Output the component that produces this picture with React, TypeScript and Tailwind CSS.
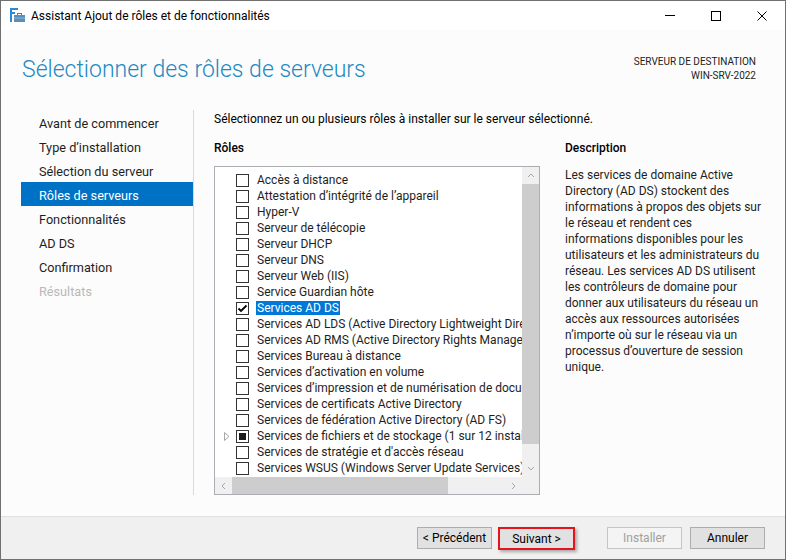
import React from "react";

const navItems = [
  { label: "Avant de commencer" },
  { label: "Type d’installation" },
  { label: "Sélection du serveur" },
  { label: "Rôles de serveurs", active: true },
  { label: "Fonctionnalités" },
  { label: "AD DS" },
  { label: "Confirmation" },
  { label: "Résultats", disabled: true },
];

type Role = {
  label: string;
  checked?: boolean;
  partial?: boolean;
  selected?: boolean;
  expandable?: boolean;
};

const roles: Role[] = [
  { label: "Accès à distance" },
  { label: "Attestation d’intégrité de l’appareil" },
  { label: "Hyper-V" },
  { label: "Serveur de télécopie" },
  { label: "Serveur DHCP" },
  { label: "Serveur DNS" },
  { label: "Serveur Web (IIS)" },
  { label: "Service Guardian hôte" },
  { label: "Services AD DS", checked: true, selected: true },
  { label: "Services AD LDS (Active Directory Lightweight Directory Services)" },
  { label: "Services AD RMS (Active Directory Rights Management Services)" },
  { label: "Services Bureau à distance" },
  { label: "Services d’activation en volume" },
  { label: "Services d’impression et de numérisation de document" },
  { label: "Services de certificats Active Directory" },
  { label: "Services de fédération Active Directory (AD FS)" },
  {
    label: "Services de fichiers et de stockage (1 sur 12 installé(s))",
    partial: true,
    expandable: true,
  },
  { label: "Services de stratégie et d'accès réseau" },
  { label: "Services WSUS (Windows Server Update Services)" },
];

const description = [
  "Les services de domaine Active",
  "Directory (AD DS) stockent des",
  "informations à propos des objets sur",
  "le réseau et rendent ces",
  "informations disponibles pour les",
  "utilisateurs et les administrateurs du",
  "réseau. Les services AD DS utilisent",
  "les contrôleurs de domaine pour",
  "donner aux utilisateurs du réseau un",
  "accès aux ressources autorisées",
  "n’importe où sur le réseau via un",
  "processus d’ouverture de session",
  "unique.",
];

const AppIcon = () => (
  <svg width="16" height="16" viewBox="0 0 16 16">
    <rect x="0" y="0" width="2" height="14" fill="#2b8ad6" />
    <rect x="0" y="0" width="8" height="2" fill="#2b8ad6" />
    <rect x="0" y="4" width="5" height="2" fill="#2b8ad6" />
    <rect x="7.5" y="5.5" width="4" height="2" fill="none" stroke="#4f7fa8" />
    <rect x="4" y="7" width="11" height="7" fill="#5b8fbb" />
    <rect x="4" y="9.5" width="11" height="1" fill="#8fb6d6" />
  </svg>
);

const Chevron = ({ dir }: { dir: "up" | "down" | "left" | "right" }) => {
  const d = {
    up: "M1 5 L4 2 L7 5",
    down: "M1 2 L4 5 L7 2",
    left: "M5 1 L2 4 L5 7",
    right: "M2 1 L5 4 L2 7",
  }[dir];
  return (
    <svg width="8" height="8" viewBox="0 0 8 8">
      <path d={d} fill="none" stroke="#a6a6a6" strokeWidth="1" />
    </svg>
  );
};

const CheckBox = ({ checked, partial }: { checked?: boolean; partial?: boolean }) => (
  <div className="w-[13px] h-[13px] border border-[#333333] bg-white flex items-center justify-center shrink-0">
    {checked && (
      <svg width="11" height="11" viewBox="0 0 11 11">
        <path d="M1.5 5.5 L4 8 L9.5 2.5" fill="none" stroke="#000" strokeWidth="1.8" />
      </svg>
    )}
    {partial && <div className="w-[7px] h-[7px] bg-[#1a1a1a]" />}
  </div>
);

const Btn = ({
  children,
  disabled,
  focus,
}: {
  children: React.ReactNode;
  disabled?: boolean;
  focus?: boolean;
}) => (
  <div
    className={
      focus
        ? "w-[77px] h-[23px] bg-[#e1e1e1] border-2 border-[#e5141c] shadow-[2px_2px_3px_rgba(0,0,0,0.3)] flex items-center justify-center"
        : disabled
        ? "w-[75px] h-[22px] bg-[#f4f4f4] border border-[#c6c6c6] text-[#a0a0a0] flex items-center justify-center"
        : "w-[75px] h-[22px] bg-[#e1e1e1] border border-[#adadad] flex items-center justify-center"
    }
  >
    {children}
  </div>
);

export default function App() {
  return (
    <div className="w-[786px] h-[560px] flex flex-col border border-[#707070] bg-[#fcfcfc] text-[12px] text-black font-['Roboto',sans-serif] overflow-hidden">
      {/* title bar */}
      <div className="h-[29px] bg-white flex items-center shrink-0">
        <div className="pl-[9px] pr-[5px] flex items-center">
          <AppIcon />
        </div>
        <span className="text-[12px] leading-[16px] pt-px">Assistant Ajout de rôles et de fonctionnalités</span>
        <div className="ml-auto flex h-full">
          <div className="w-[46px] h-full flex items-center justify-center">
            <div className="w-[10px] h-px bg-black" />
          </div>
          <div className="w-[46px] h-full flex items-center justify-center">
            <div className="w-[10px] h-[10px] border border-black" />
          </div>
          <div className="w-[46px] h-full flex items-center justify-center">
            <svg width="10" height="10" viewBox="0 0 10 10">
              <path d="M0.5 0.5 L9.5 9.5 M9.5 0.5 L0.5 9.5" stroke="#000" strokeWidth="1" />
            </svg>
          </div>
        </div>
      </div>

      {/* header */}
      <div className="h-[80px] shrink-0 flex justify-between pl-[21px] pr-[29px] pt-[24px]">
        <h1 className="text-[23px] leading-[32px] font-light text-[#2389bf]">
          Sélectionner des rôles de serveurs
        </h1>
        <div className="text-right text-[10px] leading-[14px] pt-px text-[#222]">
          <div>SERVEUR DE DESTINATION</div>
          <div>WIN-SRV-2022</div>
        </div>
      </div>

      {/* main */}
      <div className="h-[406px] shrink-0 flex">
        <div className="ml-[20px] w-[173px] h-[385px] border-r border-[#dadada] text-[12.7px]">
          {navItems.map((item) => (
            <div
              key={item.label}
              className={
                item.active
                  ? "h-[24px] pl-[18px] pt-[3px] flex items-center bg-[#0072c6] text-white"
                  : item.disabled
                  ? "h-[24px] pl-[18px] pt-[3px] flex items-center text-[#b9b9b9]"
                  : "h-[24px] pl-[18px] pt-[3px] flex items-center text-[#1e1e1e]"
              }
            >
              {item.label}
            </div>
          ))}
        </div>

        <div className="pl-[20px] pt-px flex flex-col">
          <div className="h-[16px] leading-[16px]">
            Sélectionnez un ou plusieurs rôles à installer sur le serveur sélectionné.
          </div>
          <div className="flex mt-[13px] gap-[25px]">
            {/* roles */}
            <div className="w-[326px]">
              <div className="h-[16px] leading-[16px] font-medium">Rôles</div>
              <div className="mt-[10px] border border-[#abadb3] bg-white">
                <div className="flex h-[310px]">
                  <div className="w-[307px] pt-[5px] overflow-hidden">
                    {roles.map((r) => (
                      <div key={r.label} className="h-[16px] flex items-center whitespace-nowrap">
                        <div className="w-[21px] h-full flex items-center pl-[9px] shrink-0">
                          {r.expandable && (
                            <svg width="6" height="9" viewBox="0 0 6 9">
                              <path d="M0.5 0.5 L5 4.5 L0.5 8.5 Z" fill="none" stroke="#a6a6a6" />
                            </svg>
                          )}
                        </div>
                        <CheckBox checked={r.checked} partial={r.partial} />
                        <span
                          className={
                            r.selected
                              ? "ml-[7px] px-px h-[14px] leading-[14px] bg-[#0078d7] text-white"
                              : "ml-[7px] px-px leading-[14px] text-[#1e1e1e]"
                          }
                        >
                          {r.label}
                        </span>
                      </div>
                    ))}
                  </div>
                  {/* vertical scrollbar */}
                  <div className="w-[17px] bg-[#f0f0f0] flex flex-col">
                    <div className="h-[17px] flex items-center justify-center">
                      <Chevron dir="up" />
                    </div>
                    <div className="h-[260px] bg-[#cdcdcd]" />
                    <div className="flex-1" />
                    <div className="h-[17px] flex items-center justify-center">
                      <Chevron dir="down" />
                    </div>
                  </div>
                </div>
                {/* horizontal scrollbar */}
                <div className="flex h-[17px]">
                  <div className="w-[307px] bg-[#f0f0f0] flex">
                    <div className="w-[17px] flex items-center justify-center">
                      <Chevron dir="left" />
                    </div>
                    <div className="w-[216px] bg-[#cdcdcd]" />
                    <div className="flex-1" />
                    <div className="w-[17px] flex items-center justify-center">
                      <Chevron dir="right" />
                    </div>
                  </div>
                  <div className="w-[17px] bg-[#f0f0f0]" />
                </div>
              </div>
            </div>

            {/* description */}
            <div className="w-[200px]">
              <div className="h-[16px] leading-[16px] font-medium">Description</div>
              <div className="mt-[11px] text-[#1e1e1e]">
                {description.map((line) => (
                  <div key={line} className="h-[16px] leading-[16px] whitespace-nowrap">
                    {line}
                  </div>
                ))}
              </div>
            </div>
          </div>
        </div>
      </div>

      {/* footer */}
      <div className="flex-1 border-t border-[#dfdfdf] bg-[#f0f0f0] flex justify-end items-start pt-[10px] pr-[20px]">
        <Btn>&lt; Précédent</Btn>
        <div className="ml-[6px]">
          <Btn focus>Suivant &gt;</Btn>
        </div>
        <div className="ml-[32px]">
          <Btn disabled>Installer</Btn>
        </div>
        <div className="ml-[8px]">
          <Btn>Annuler</Btn>
        </div>
      </div>
    </div>
  );
}
